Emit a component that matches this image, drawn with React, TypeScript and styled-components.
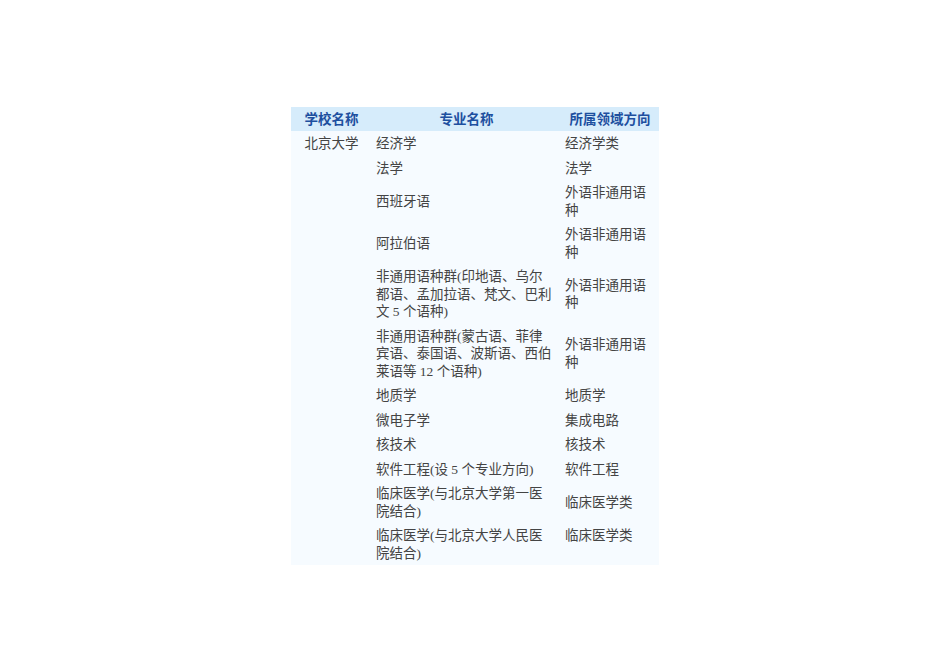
import styled, { createGlobalStyle } from 'styled-components';

const GlobalStyle = createGlobalStyle`
  html, body {
    margin: 0;
    padding: 0;
    background: #ffffff;
  }
  body {
    font-family: 'Liberation Serif', 'Noto Sans CJK SC', serif;
  }
`;

const Page = styled.div`
  width: 950px;
  height: 672px;
  padding-top: 107px;
  padding-left: 291px;
  box-sizing: border-box;
`;

const Table = styled.table`
  border-collapse: collapse;
  table-layout: fixed;
  width: 368px;
  font-size: 13.5px;
  line-height: 17.5px;
  background: #f6fbff;
`;

const HeadCell = styled.th`
  background: #d6ecfb;
  color: #1d4f9f;
  font-family: 'Noto Sans CJK SC', sans-serif;
  font-weight: 700;
  font-size: 13.5px;
  height: 24px;
  padding: 0;
  text-align: center;
  vertical-align: middle;
  white-space: nowrap;
`;

const Cell = styled.td<{ $align?: 'top' | 'middle'; $center?: boolean; $wide?: boolean }>`
  color: #444444;
  padding: 4px ${({ $wide }) => ($wide ? '8px' : '4px')} 3px 4px;
  text-align: ${({ $center }) => ($center ? 'center' : 'left')};
  vertical-align: ${({ $align }) => $align ?? 'middle'};
`;

type Row = { major: string; field: string; fieldTop?: boolean };

const rows: Row[] = [
  { major: '经济学', field: '经济学类' },
  { major: '法学', field: '法学' },
  { major: '西班牙语', field: '外语非通用语种' },
  { major: '阿拉伯语', field: '外语非通用语种' },
  { major: '非通用语种群(印地语、乌尔都语、孟加拉语、梵文、巴利文 5 个语种)', field: '外语非通用语种' },
  { major: '非通用语种群(蒙古语、菲律宾语、泰国语、波斯语、西伯莱语等 12 个语种)', field: '外语非通用语种' },
  { major: '地质学', field: '地质学' },
  { major: '微电子学', field: '集成电路' },
  { major: '核技术', field: '核技术' },
  { major: '软件工程(设 5 个专业方向)', field: '软件工程' },
  { major: '临床医学(与北京大学第一医院结合)', field: '临床医学类' },
  { major: '临床医学(与北京大学人民医院结合)', field: '临床医学类', fieldTop: true },
];

export default function App() {
  return (
    <>
      <GlobalStyle />
      <Page>
        <Table>
          <colgroup>
            <col style={{ width: 81 }} />
            <col style={{ width: 189 }} />
            <col style={{ width: 98 }} />
          </colgroup>
          <thead>
            <tr>
              <HeadCell>学校名称</HeadCell>
              <HeadCell>专业名称</HeadCell>
              <HeadCell>所属领域方向</HeadCell>
            </tr>
          </thead>
          <tbody>
            {rows.map((row, i) => (
              <tr key={row.major}>
                {i === 0 && (
                  <Cell rowSpan={rows.length} $align="top" $center>
                    北京大学
                  </Cell>
                )}
                <Cell $wide>{row.major}</Cell>
                <Cell $align={row.fieldTop ? 'top' : 'middle'}>{row.field}</Cell>
              </tr>
            ))}
          </tbody>
        </Table>
      </Page>
    </>
  );
}
